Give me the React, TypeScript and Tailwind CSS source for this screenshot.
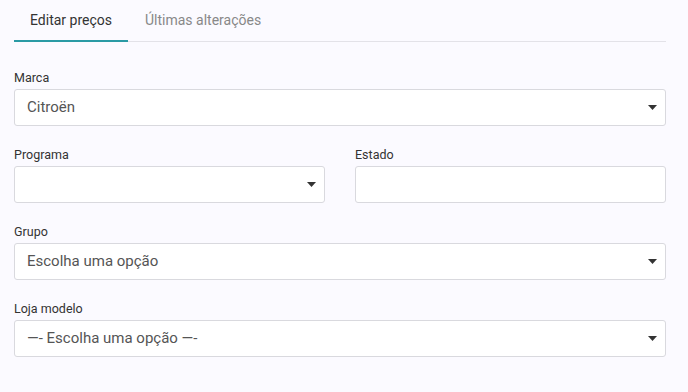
import { useState } from "react";

type FieldProps = {
    label: string;
    value?: string;
    select?: boolean;
};

const Caret = () => (
    <svg width="9" height="5" viewBox="0 0 9 5" className="shrink-0">
        <path d="M0 0 H9 L4.5 5 Z" fill="#333333" />
    </svg>
);

const Field = ({ label, value = "", select = true }: FieldProps) => {
    return (
        <div className="flex flex-col">
            <label className="text-[12.5px] leading-[16px] text-[#333] mb-[3px]">{label}</label>
            <div className="flex h-[37px] items-center justify-between rounded-[3px] border border-[#d9d9de] bg-white pl-[12px] pr-[8px]">
                <span className="text-[15px] text-[#555]">{value}</span>
                {select && <Caret />}
            </div>
        </div>
    );
};

export default function App() {
    const [tab, setTab] = useState("editar");

    return (
        <div
            className="min-h-screen w-[688px] bg-[#fbfaff] pl-[14px] pr-[22px]"
            style={{ fontFamily: "Roboto, 'Liberation Sans', sans-serif" }}
        >
            {/* Tabs */}
            <div className="flex h-[42px] border-b border-[#e3e2e8]">
                <button
                    onClick={() => setTab("editar")}
                    className={`w-[114px] h-[42px] border-b-2 text-[14px] ${
                        tab === "editar" ? "border-[#2a9aa4] text-[#333]" : "border-transparent text-[#888]"
                    }`}
                >
                    Editar preços
                </button>
                <button
                    onClick={() => setTab("ultimas")}
                    className={`px-[17px] h-[42px] border-b-2 text-[14px] ${
                        tab === "ultimas" ? "border-[#2a9aa4] text-[#333]" : "border-transparent text-[#888]"
                    }`}
                >
                    Últimas alterações
                </button>
            </div>

            {/* Form */}
            <div className="flex flex-col gap-[21px] pt-[28px]">
                <Field label="Marca" value="Citroën" />
                <div className="grid grid-cols-2 gap-[30px]">
                    <Field label="Programa" />
                    <Field label="Estado" select={false} />
                </div>
                <Field label="Grupo" value="Escolha uma opção" />
                <Field label="Loja modelo" value="—- Escolha uma opção —-" />
            </div>
        </div>
    );
}
